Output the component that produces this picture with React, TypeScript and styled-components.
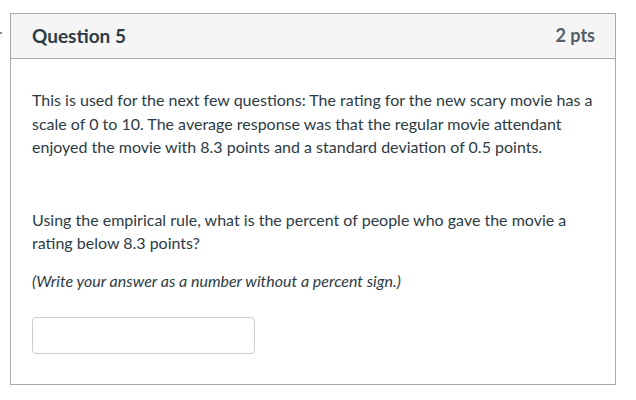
import styled, { createGlobalStyle } from 'styled-components';

const GlobalStyle = createGlobalStyle`
	body {
		margin: 0;
		background: #fff;
		font-family: Lato, "Open Sans", sans-serif;
		color: #2d3b45;
	}
`;

const Page = styled.div`
	position: relative;
	padding: 13px 0 0 10px;
`;

const EdgeMark = styled.span`
	position: absolute;
	left: 0;
	top: 32px;
	width: 2px;
	height: 2px;
	background: #7a8fa3;
`;

const Card = styled.div`
	width: 606px;
	height: 372px;
	box-sizing: border-box;
	border: 1px solid #aaaaaa;
	display: flex;
	flex-direction: column;
`;

const Header = styled.div`
	height: 45px;
	box-sizing: border-box;
	background: #f5f5f5;
	border-bottom: 1px solid #aaaaaa;
	padding: 0 20px 2px 21px;
	display: flex;
	align-items: center;
	justify-content: space-between;
	font-weight: 700;
`;

const Title = styled.h2`
	margin: 0;
	font-size: 19px;
	color: #2d3b45;
`;

const Points = styled.span`
	font-size: 18px;
	color: #555f66;
`;

const Body = styled.div`
	padding: 29px 21px 0;
	font-size: 16px;
	line-height: 23.5px;
`;

const Text = styled.p<{ $gap?: number; $italic?: boolean }>`
	margin: 0 0 ${(p) => p.$gap ?? 14}px;
	font-style: ${(p) => (p.$italic ? 'italic' : 'normal')};
`;

const Answer = styled.input`
	display: block;
	width: 223px;
	height: 37px;
	box-sizing: border-box;
	border: 1px solid #c7cdd1;
	border-radius: 4px;
	font-family: inherit;
	font-size: 16px;
	padding: 0 8px;
	&:focus {
		outline: none;
	}
`;

function App() {
	return (
		<>
			<GlobalStyle />
			<Page>
				<EdgeMark />
				<Card>
					<Header>
						<Title>Question 5</Title>
						<Points>2 pts</Points>
					</Header>
					<Body>
						<Text $gap={49}>
							This is used for the next few questions: The rating for the new scary movie has a
							scale of 0 to 10. The average response was that the regular movie attendant
							enjoyed the movie with 8.3 points and a standard deviation of 0.5 points.
						</Text>
						<Text>
							Using the empirical rule, what is the percent of people who gave the movie a
							rating below 8.3 points?
						</Text>
						<Text $italic $gap={25}>
							(Write your answer as a number without a percent sign.)
						</Text>
						<Answer type="text" aria-label="Answer" />
					</Body>
				</Card>
			</Page>
		</>
	);
}

export default App;
